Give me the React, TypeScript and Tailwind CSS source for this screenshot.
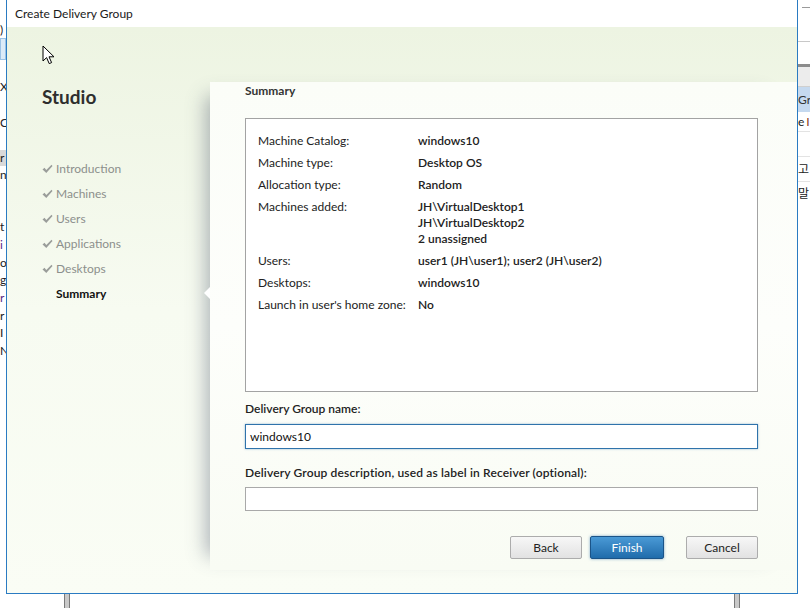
const rows: [string, string[]][] = [
  ["Machine Catalog:", ["windows10"]],
  ["Machine type:", ["Desktop OS"]],
  ["Allocation type:", ["Random"]],
  ["Machines added:", ["JH\\VirtualDesktop1", "JH\\VirtualDesktop2", "2 unassigned"]],
  ["Users:", ["user1 (JH\\user1); user2 (JH\\user2)"]],
  ["Desktops:", ["windows10"]],
  ["Launch in user's home zone:", ["No"]],
];

const steps = ["Introduction", "Machines", "Users", "Applications", "Desktops"];

function Check() {
  return (
    <svg width="11" height="10" viewBox="0 0 11 10" className="mr-[3px] shrink-0">
      <path d="M0.5 5.5 L2.5 3.8 L4.3 6 L9.5 0.8 L10.5 2 L4.3 9 Z" fill="#9a9d9a" />
    </svg>
  );
}

function Cursor() {
  return (
    <svg width="14" height="21" viewBox="0 0 14 21" className="absolute left-[35px] top-[45px]">
      <path
        d="M1 1 L1 16 L4.6 12.6 L7.2 18.6 L9.6 17.6 L7 11.8 L12 11.8 Z"
        fill="#fff"
        stroke="#000"
        strokeWidth="1"
        strokeLinejoin="round"
      />
    </svg>
  );
}

function LeftStrip() {
  const bits: [number, string, string][] = [
    [22, "", ""],
    [16, ")", ""],
    [22, "", "box"],
    [20, "", ""],
    [14, "X", ""],
    [20, "", ""],
    [18, "C", ""],
    [18, "", ""],
    [16, "r", "gray"],
    [18, "n", ""],
    [34, "", ""],
    [18, "t", ""],
    [18, "i", "purple"],
    [17, "o", ""],
    [18, "g", ""],
    [18, "r", "purple"],
    [17, "r", ""],
    [18, "I", ""],
    [18, "N", ""],
  ];
  return (
    <div className="flex w-[6px] shrink-0 flex-col overflow-hidden bg-white text-[12px] leading-[16px] text-[#222]">
      {bits.map(([h, t, k], i) => (
        <div
          key={i}
          style={{ height: h }}
          className={
            k === "box"
              ? "border border-[#9cc3e6] bg-[#dcebf8]"
              : k === "gray"
                ? "flex items-center bg-[#d9d9d9]"
                : k === "purple"
                  ? "flex items-center text-[#5b2a86]"
                  : "flex items-center"
          }
        >
          {t}
        </div>
      ))}
    </div>
  );
}

function RightStrip() {
  return (
    <div className="flex min-w-0 flex-1 flex-col overflow-hidden bg-white text-[12px] leading-[16px] text-[#222]">
      <div className="h-[7px]" />
      <div className="ml-[4px] h-px w-[8px] bg-[#9a9a9a]" />
      <div className="h-[33px]" />
      <div className="h-px bg-[#c8c8c8]" />
      <div className="h-[22px]" />
      <div className="h-[3px] bg-[#8c8c8c]" />
      <div className="h-[20px] border-b border-[#cfcfcf] bg-[#ececec]" />
      <div className="flex h-[25px] items-center whitespace-nowrap bg-[#c5d9ef] text-[#333]">Gro</div>
      <div className="flex h-[19px] items-center whitespace-nowrap">
        e <span className="ml-[2px] text-[#8b3a1a]">I</span>
      </div>
      <div className="h-px bg-[#e3e3e3]" />
      <div className="h-[24px]" />
      <div className="h-px bg-[#e3e3e3]" />
      <div className="flex h-[24px] items-center font-['Noto_Sans_CJK_KR',sans-serif]">고</div>
      <div className="h-px bg-[#e3e3e3]" />
      <div className="flex h-[22px] items-center font-['Noto_Sans_CJK_KR',sans-serif]">말</div>
    </div>
  );
}

function GrayButton({ label }: { label: string }) {
  return (
    <button className="h-[23px] w-[72px] rounded-[2px] border border-[#acacac] bg-gradient-to-b from-[#f7f7f7] to-[#e2e2e2] text-[12px] text-[#222]">
      {label}
    </button>
  );
}

export default function App() {
  return (
    <div className="relative flex h-[608px] w-[810px] flex-col overflow-hidden bg-white font-['Lato','Noto_Sans',sans-serif]">
      <div className="flex h-[594px] shrink-0">
        <LeftStrip />

        {/* dialog */}
        <div className="relative flex w-[792px] shrink-0 flex-col border-x border-b border-[#2a7bc2]">
          <div className="flex h-[27px] shrink-0 items-center bg-white pl-[8px] text-[12px] text-[#1a1a1a]">
            Create Delivery Group
          </div>

          <div className="flex min-h-0 flex-1 bg-gradient-to-b from-[#edf4e2] via-[#f7fbf1] to-[#fafdf5]">
            {/* wizard steps */}
            <div className="flex w-[203px] shrink-0 flex-col pl-[35px] pt-[58px]">
              <div className="h-[24px] text-[19px] font-bold leading-[24px] text-[#2e2e2e]">Studio</div>
              <div className="mt-[47px] flex flex-col">
                {steps.map((s) => (
                  <div key={s} className="flex h-[25px] items-center text-[12px] text-[#8c8f8c]">
                    <Check />
                    {s}
                  </div>
                ))}
                <div className="flex h-[25px] items-center pl-[14px] text-[12px] font-bold text-[#111]">Summary</div>
              </div>
            </div>

            {/* summary page */}
            <div className="relative mb-[23px] mt-[55px] flex min-w-0 flex-1 flex-col bg-gradient-to-b from-[#fbfdf8] via-[#fdfefb] to-[#f9fcf4] pl-[35px] pr-[39px] pt-[1px] shadow-[-18px_0_18px_-14px_rgba(80,90,110,0.45)]">
              <div className="absolute left-[-6px] top-[205px] h-0 w-0 border-y-[6px] border-r-[6px] border-y-transparent border-r-white" />

              <div className="h-[16px] text-[12px] font-bold leading-[16px] text-[#333]">Summary</div>

              <div className="mt-[19px] h-[274px] border border-[#a3a3a3] bg-white px-[12px] pt-[14px]">
                <div className="flex flex-col gap-[6px] text-[12px] leading-[16px] text-[#222]">
                  {rows.map(([label, vals]) => (
                    <div key={label} className="flex">
                      <div className="w-[160px] shrink-0">{label}</div>
                      <div className="flex flex-col font-semibold">
                        {vals.map((v) => (
                          <div key={v}>{v}</div>
                        ))}
                      </div>
                    </div>
                  ))}
                </div>
              </div>

              <div className="mt-[9px] h-[16px] text-[12px] font-semibold leading-[16px] text-[#222]">
                Delivery Group name:
              </div>
              <div className="mt-[7px] flex h-[25px] items-center border border-[#2f73ab] bg-white pl-[4px] text-[12px] text-[#111] shadow-[0_0_2px_rgba(47,115,171,0.5)]">
                windows10
              </div>

              <div className="mt-[16px] h-[16px] text-[12px] font-semibold leading-[16px] tracking-[0.15px] text-[#222]">
                Delivery Group description, used as label in Receiver (optional):
              </div>
              <div className="mt-[6px] h-[24px] border border-[#a9a9a9] bg-white" />

              <div className="mt-[25px] flex justify-end">
                <GrayButton label="Back" />
                <button className="ml-[8px] h-[23px] w-[74px] rounded-[2px] border border-[#1b5488] bg-gradient-to-b from-[#4a9ad6] to-[#1f6cab] text-[12px] text-white shadow-[0_0_3px_rgba(40,110,170,0.6)]">
                  Finish
                </button>
                <div className="w-[22px]" />
                <GrayButton label="Cancel" />
              </div>
            </div>
          </div>

          <Cursor />
        </div>

        <RightStrip />
      </div>

      {/* behind the dialog */}
      <div className="flex flex-1 bg-white">
        <div className="ml-[64px] w-[6px] border-x border-[#7a7a7a] bg-[#c9c9c9]" />
        <div className="flex-1" />
        <div className="mr-[70px] w-[6px] border-x border-[#7a7a7a] bg-[#c9c9c9]" />
      </div>
    </div>
  );
}
